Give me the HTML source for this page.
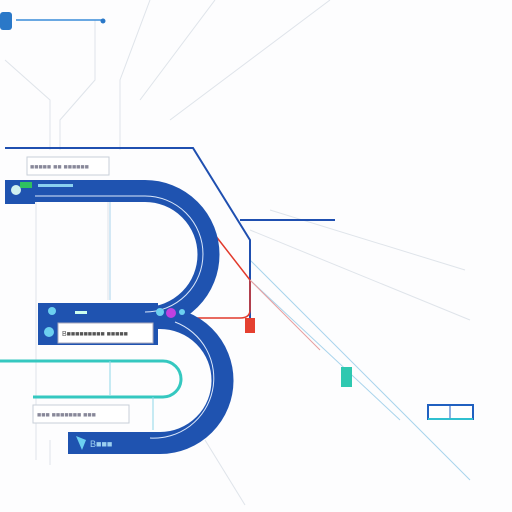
<!DOCTYPE html><html><head><style>html,body{margin:0;padding:0;background:#fdfdfe;width:512px;height:512px;overflow:hidden}</style></head><body>
<svg width="512" height="512" viewBox="0 0 512 512" xmlns="http://www.w3.org/2000/svg" font-family="Liberation Sans, sans-serif">
<rect width="512" height="512" fill="#fdfdfe"/>
<!-- faint lines -->
<g stroke="#dfe4ea" stroke-width="1" fill="none">
<path d="M95 20 V80 L60 120 V150"/><path d="M5 60 L50 100 V150"/>
<path d="M150 0 L120 80 V150"/><path d="M215 0 L140 100"/><path d="M330 0 L170 120"/>
<path d="M36 200 V460"/><path d="M108 200 V300"/><path d="M50 440 V465"/>
<path d="M270 210 L465 270"/><path d="M250 230 L470 320"/>
<path d="M205 440 L245 505"/>
</g>
<g stroke="#a9d4ec" stroke-width="1" fill="none">
<path d="M250 260 L470 480"/><path d="M250 280 L400 420"/>
<path d="M110 200 V300"/>
</g>
<!-- top left -->
<rect x="0" y="12" width="12" height="18" rx="3" fill="#2a78c8"/>
<path d="M16 20 H103" stroke="#3a8bd8" stroke-width="1.5"/><circle cx="103" cy="21" r="2.5" fill="#2a78c8"/>
<!-- dark blue connectors -->
<path d="M5 148 H193 L250 240 V320" stroke="#1f4fb0" stroke-width="2" fill="none"/>
<path d="M240 220 H335" stroke="#1f4fb0" stroke-width="2"/>
<path d="M215 235 L250 280 V310 Q250 318 240 318 H190" stroke="#e23a2c" stroke-width="1.5" fill="none"/>
<path d="M250 280 L320 350" stroke="#e8a0a0" stroke-width="1"/>
<rect x="245" y="318" width="10" height="15" fill="#e54030"/>
<!-- B shape -->
<path d="M5 191 H145 A63.5 63.5 0 0 1 145 318 H60" stroke="#1f53b0" stroke-width="22" fill="none"/>
<rect x="5" y="180" width="30" height="24" fill="#1f53b0"/>
<rect x="38" y="303" width="120" height="42" fill="#1f53b0"/>
<path d="M150 318 H160 A62.5 62.5 0 0 1 160 443 H68" stroke="#1f53b0" stroke-width="22" fill="none"/>
<path d="M35 196 H145 A58 58 0 0 1 145 312" stroke="#dbe8fb" stroke-width="1" fill="none"/>
<path d="M175 322 A60 60 0 0 1 150 438" stroke="#dbe8fb" stroke-width="1" fill="none"/>
<!-- teal -->
<path d="M0 361 H163 A18 18 0 0 1 163 397 H33" stroke="#35c8c0" stroke-width="3" fill="none"/>
<path d="M110 361 V395 M153 397 V430" stroke="#8ed8e8" stroke-width="1"/>
<!-- labels -->
<rect x="27" y="157" width="82" height="18" fill="#fff" stroke="#c8cfd8"/>
<text x="30" y="169" font-size="7" fill="#889">■■■■■ ■■ ■■■■■■</text>
<rect x="58" y="323" width="95" height="20" fill="#fff" stroke="#aab"/>
<text x="62" y="336" font-size="7" fill="#555">B■■■■■■■■■ ■■■■■</text>
<rect x="33" y="405" width="96" height="18" fill="#fff" stroke="#c8cfd8"/>
<text x="37" y="417" font-size="7" fill="#889">■■■ ■■■■■■■ ■■■</text>
<rect x="20" y="182" width="12" height="6" fill="#2fc060"/>
<circle cx="16" cy="190" r="5" fill="#d0f0f0"/>
<rect x="38" y="184" width="35" height="3" fill="#8ad0f0"/>
<circle cx="52" cy="311" r="4" fill="#6cd0f0"/><circle cx="49" cy="332" r="5" fill="#6cd0f0"/>
<rect x="75" y="311" width="12" height="3" fill="#cfe"/>
<circle cx="160" cy="312" r="4" fill="#6cd0f0"/>
<circle cx="171" cy="313" r="5" fill="#c040e0"/>
<circle cx="182" cy="312" r="3" fill="#6cd0f0"/>
<path d="M76 436 L86 440 L82 450 Z" fill="#6cd0f0"/>
<text x="90" y="447" font-size="9" fill="#9cd0f0">B■■■</text>
<rect x="341" y="367" width="11" height="20" fill="#2fc8b0"/>
<rect x="428" y="405" width="45" height="14" fill="#fff" stroke="#2060c0" stroke-width="2"/>
<path d="M450 405 V419" stroke="#2060c0"/>
<path d="M428 419 H473" stroke="#30c0d0" stroke-width="2"/>
</svg>
</body></html>
